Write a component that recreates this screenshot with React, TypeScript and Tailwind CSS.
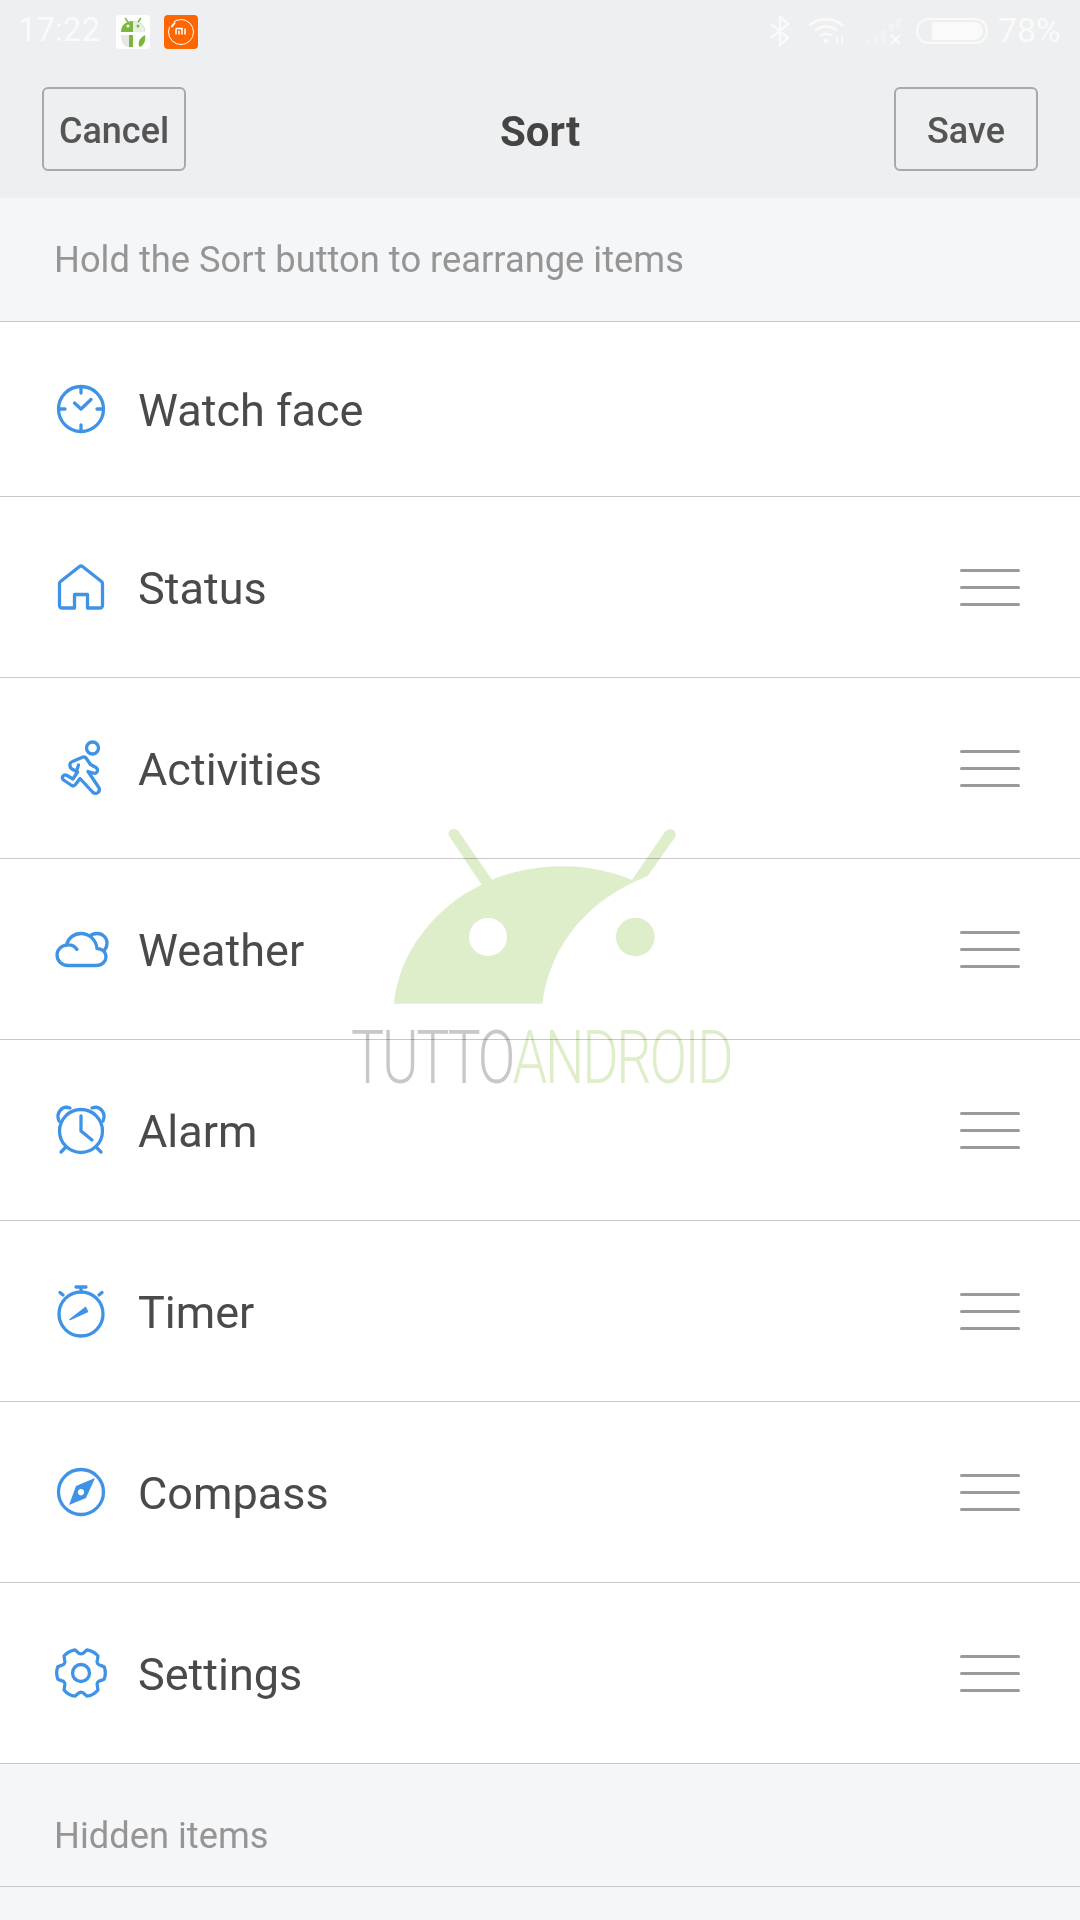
const BLUE = "#3f93e6";

function gearPath() {
  const pt = (r: number, deg: number) => {
    const a = (deg * Math.PI) / 180;
    return `${(30 + r * Math.cos(a)).toFixed(2)} ${(30 + r * Math.sin(a)).toFixed(2)}`;
  };
  let d = "";
  for (let i = 0; i < 6; i++) {
    const a = i * 60;
    d += `${i === 0 ? "M" : "L"}${pt(24, a - 15)} Q${pt(25.5, a)} ${pt(24, a + 15)} `;
    d += `L${pt(21.5, a + 20)} Q${pt(17, a + 30)} ${pt(21.5, a + 40)} L${pt(24, a + 45)} `;
  }
  return d + "Z";
}

const icons: Record<string, React.ReactNode> = {
  watch: (
    <>
      <circle cx="30" cy="30" r="22.5" />
      <path d="M30 8v6M30 46v6M8 30h6M46 30h6M23.5 24l6.5 6 10-9.5" />
    </>
  ),
  home: (
    <path d="M23.5 51V37.5h13V51H49a2.5 2.5 0 0 0 2.5-2.5V26.5a2.5 2.5 0 0 0-1-2L31.5 9.5a2.5 2.5 0 0 0-3 0L9.500 24.500a2.500 2.500 0 0 0-1 2V48.500a2.500 2.500 0 0 0 2.500 2.500Z" />
  ),
  run: (
    <>
      <circle cx="41.500" cy="10" r="6" />
      <path d="M21.500 23.500 32 19q2-.5 3 1l4.500 6.500 5.500 3q2.500 2 1 4.500-1.500 2-4 1l-5-1.500L47.500 49q2 3-.5 5.500-3 2-5.500-.5L29 40.500l-4.500 6q-2 2.500-4.500.5l-7.500-5q-2-2-.5-4 1.500-2 4-.5l6 3.500 4.500-7-5.500-3q-2.500-1.500-2-5 .5-2 2.500-2.500Zm6 3.500-2 6" />
    </>
  ),
  cloud: (
    <path d="M17 46.500H45C51.500 46.500 55 42 55 38C55 33 51 29.500 46 29.500C45 20.500 38 14.500 30 14.500C23 14.500 17 19 15.500 26M26 30.500C24 27.500 20 25.500 16 26C10 26.500 6 31 6 36C6 42 11 46.500 17 46.500M39 17C41 15 44 14.500 46 14.500C52 14.500 56 19 56 24C56 26 55.500 29 53.500 31" />
  ),
  alarm: (
    <>
      <circle cx="30" cy="31" r="21.500" />
      <path d="M30 16v15l11 9M8 21C4.500 13 11 5 19 8M52 21C55.500 13 49 5 41 8M14 48l-4 4M46 48l4 4" />
    </>
  ),
  timer: (
    <>
      <circle cx="30" cy="33" r="22" />
      <path d="M25 6h10M30 6v5M12 14l-3-2.500M48 14l3-2.500" />
      <path d="M34.500 26.500 36.500 30.500 19 38.500Z" fill={BLUE} stroke={BLUE} strokeWidth="1.500" />
    </>
  ),
  compass: (
    <>
      <circle cx="30" cy="30" r="22.500" />
      <path
        fillRule="evenodd"
        d="M44 16 35 36 18 43 25 24ZM30 27a3.200 3.200 0 1 0 .01 0Z"
        fill={BLUE}
        stroke="none"
      />
    </>
  ),
  gear: (
    <>
      <path d={gearPath()} />
      <circle cx="30" cy="30" r="8.500" />
    </>
  ),
};

const rows = [
  { key: "watch", label: "Watch face", h: "h-[175px]", handle: false },
  { key: "home", label: "Status", h: "h-[181px]", handle: true },
  { key: "run", label: "Activities", h: "h-[181px]", handle: true },
  { key: "cloud", label: "Weather", h: "h-[181px]", handle: true },
  { key: "alarm", label: "Alarm", h: "h-[181px]", handle: true },
  { key: "timer", label: "Timer", h: "h-[181px]", handle: true },
  { key: "compass", label: "Compass", h: "h-[181px]", handle: true },
  { key: "gear", label: "Settings", h: "h-[181px]", handle: true },
];

function StatusBar() {
  return (
    <div className="flex h-[61px] items-center pl-[18px] pr-[19px] pt-[2px] text-[#fafafa]">
      <span className="mb-[4px] w-[98px] text-[33px] leading-none">17:22</span>
      <svg width="34" height="34" viewBox="0 0 34 34" className="mr-[14px]">
        <rect width="34" height="34" rx="3" fill="#fff" />
        <path d="M5 17C5 10 10 6 17 6s12 4 12 11Z" fill="#7ab73c" />
        <path d="M17 6c7 0 12 4 12 11H17Z" fill="#e9eee4" />
        <path d="M9 3l3 4M25 3l-3 4" stroke="#7ab73c" strokeWidth="1.500" />
        <circle cx="12" cy="11" r="1.500" fill="#fff" />
        <circle cx="22" cy="11" r="1.500" fill="#7ab73c" />
        <path d="M5 20h12v12h-6C7 31 5 26 5 20Z" fill="#e6e8e3" />
        <path d="M13 20h4v12h-4ZM24 32c-3-3-1-9 5-12 1 6-1 10-5 12Z" fill="#7ab73c" />
      </svg>
      <svg width="34" height="34" viewBox="0 0 34 34">
        <rect width="34" height="34" rx="4" fill="#ff6600" />
        <circle cx="17" cy="17" r="12.500" fill="none" stroke="#fff" strokeWidth="1" />
        <path d="M6 12l4-5" stroke="#ff6600" strokeWidth="4" />
        <path d="M7.500 12l3.500-4.500" stroke="#fff" strokeWidth="2" />
        <path d="M12 13.500h6v6M12 13.500v6M15 15.500v4M21 13.500v6" fill="none" stroke="#fff" strokeWidth="1.500" />
      </svg>
      <div className="flex-1" />
      <svg width="20" height="32" viewBox="0 0 20 32" fill="none" stroke="#fafafa" strokeWidth="2.500" className="mr-[18px] mb-[2px]">
        <path d="M1 9l17 14-8 7V2l8 7L1 23" />
      </svg>
      <svg width="38" height="28" viewBox="0 0 38 28" fill="none" stroke="#fafafa" strokeWidth="2.500" className="mr-[18px] mb-[2px]">
        <path d="M1 9c9-9 25-9 34 0M7 14c6-6 16-6 22 0M12 19c4-3 8-3 12 0" />
        <circle cx="18" cy="24" r="2.500" fill="#fafafa" stroke="none" />
        <path d="M29 19v8M34 19v8" strokeWidth="1.500" />
      </svg>
      <svg width="38" height="28" viewBox="0 0 38 28" className="mr-[14px] mb-[2px]">
        <path d="M1 27h5v-4H1ZM9 27h5v-9H9ZM17 27h5V13h-5ZM25 14h5V7h-5ZM32 10h5V1h-5Z" fill="#f2f3f4" />
        <path d="M27 18l9 9M36 18l-9 9" stroke="#fafafa" strokeWidth="1.800" />
      </svg>
      <div className="mb-[2px] mr-[10px] flex h-[26px] w-[72px] items-center justify-end rounded-[13px] border-2 border-[#fafafa] pr-[3px]">
        <div className="h-[18px] w-[51px] rounded-r-[9px] bg-[#fafafa]" />
      </div>
      <span className="mb-[4px] text-[34px] leading-none">78%</span>
    </div>
  );
}

function Header() {
  const btn =
    "flex h-[84px] w-[144px] items-center justify-center rounded-[6px] border-2 border-[#a8a9ab] pt-[4px] text-[36px] font-medium text-[#555555]";
  return (
    <div className="flex h-[137px] items-center justify-between pb-[1px] pl-[42px] pr-[42px]">
      <div className={btn}>Cancel</div>
      <div className="pt-[4px] text-[42px] font-bold text-[#444444]">Sort</div>
      <div className={btn}>Save</div>
    </div>
  );
}

function Handle() {
  return (
    <div className="flex w-[60px] flex-col gap-[14px]">
      <div className="h-[3px] rounded-full bg-[#9a9a9a]" />
      <div className="h-[3px] rounded-full bg-[#9a9a9a]" />
      <div className="h-[3px] rounded-full bg-[#9a9a9a]" />
    </div>
  );
}

function Watermark() {
  return (
    <div className="pointer-events-none absolute left-[340px] top-[810px] h-[290px] w-[400px] mix-blend-multiply">
      <svg width="400" height="290" viewBox="0 0 1200 870">
        <path
          d="M162 581C175 430 285 290 425 224L327 78Q322 66 332 59Q345 53 355 63L456 209C590 155 750 155 876 210L975 65Q985 53 1000 60Q1012 68 1005 82L923 198C750 265 630 400 607 581Z"
          fill="#deedca"
        />
        <circle cx="444" cy="381" r="57" fill="#fff" />
        <circle cx="886" cy="381" r="58" fill="#deedca" />
      </svg>
      <div className="absolute left-[11px] top-[203px] origin-left scale-x-[0.74] whitespace-nowrap text-[75px] font-light leading-[88px] tracking-[-3px]">
        <span className="text-[#c8c8c8]">TUTTO</span>
        <span className="text-[#deedca]">ANDROID</span>
      </div>
    </div>
  );
}

export default function App() {
  return (
    <div className="relative h-[1920px] w-[1080px] overflow-hidden bg-[#f5f6f8] font-['Roboto',sans-serif]">
      <div className="bg-[#eeeff1]">
        <StatusBar />
        <Header />
      </div>
      <div className="flex h-[124px] items-center border-b border-[#c8c8c8] pt-[1px] pl-[54px] text-[36.300px] text-[#959595]">
        Hold the Sort button to rearrange items
      </div>
      <div className="bg-white">
        {rows.map((row) => (
          <div key={row.key} className={`flex ${row.h} items-center border-b border-[#c8c8c8] pl-[51px] pr-[60px]`}>
            <svg
              width="60"
              height="60"
              viewBox="0 0 60 60"
              fill="none"
              stroke={BLUE}
              strokeWidth="3.300"
              strokeLinecap="round"
              strokeLinejoin="round"
              className="mr-[27px] shrink-0"
            >
              {icons[row.key]}
            </svg>
            <span className="flex-1 pt-[4px] text-[45px] text-[#4a4a4a]">{row.label}</span>
            {row.handle ? <Handle /> : null}
          </div>
        ))}
      </div>
      <div className="flex h-[123px] items-center border-b border-[#c8c8c8] pl-[54px] pt-[22px] text-[36.300px] text-[#959595]">
        Hidden items
      </div>
      <Watermark />
    </div>
  );
}
